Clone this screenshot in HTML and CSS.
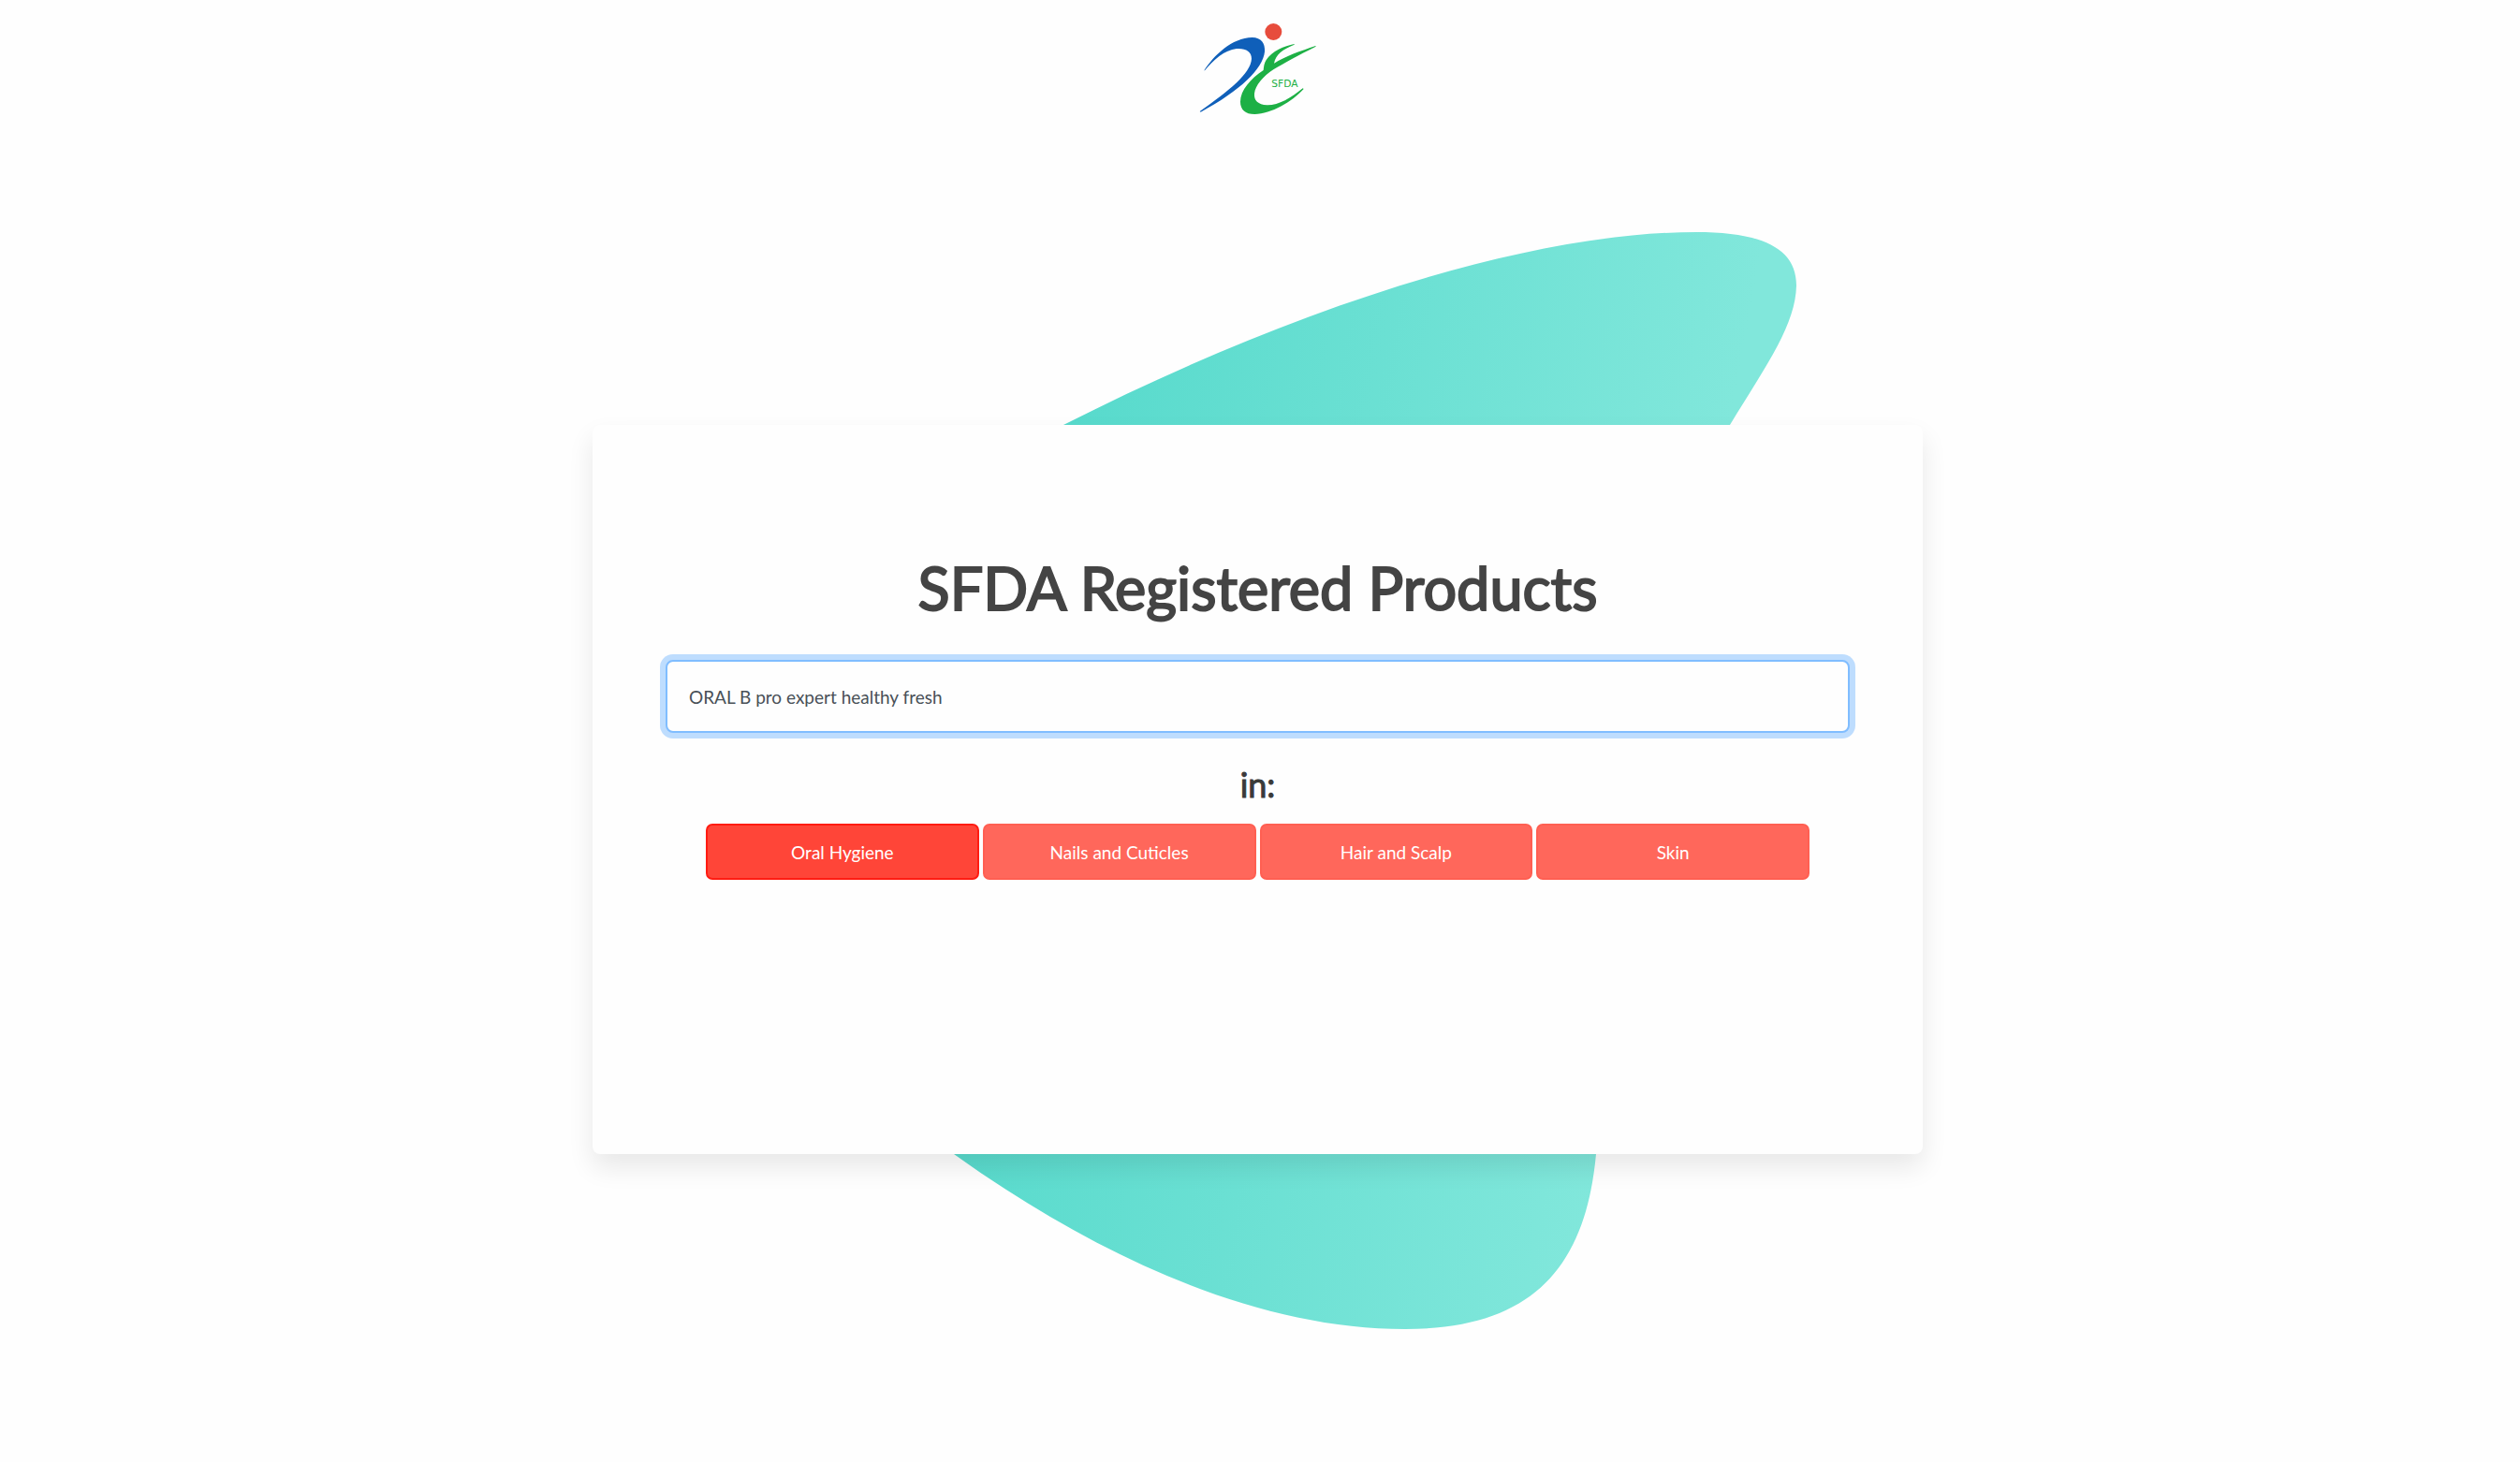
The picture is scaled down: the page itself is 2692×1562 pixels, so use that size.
FILE: index.html
```html
<!DOCTYPE html>
<html lang="en">
<head>
<meta charset="utf-8">
<meta name="viewport" content="width=device-width, initial-scale=1">
<title>SFDA Registered Products</title>
<link rel="stylesheet" href="styles.css">
</head>
<body>
<header class="header">
  <svg class="logo" viewBox="-9 0 459 375" role="img" aria-label="SFDA logo">
    <circle cx="271" cy="72" r="27" fill="#e74c3c"/>
    <path fill="#0f5fb9" d="M49 196C80 148 138 91 203 90C232 91 245 108 243 136C237 190 167 260 38 329L35 327C128 260 198 207 201 158C201 135 182 124 153 126C114 130 78 163 51 196Z"/>
    <path fill="#1db045" d="M338 111C306 117 266 134 248 162C241 173 240 185 239 195C198 222 165 260 165 296C165 321 181 336 211 336C264 335 331 296 368 255L365 253C326 285 287 308 250 307C222 305 208 292 210 270C213 244 238 214 271 193C298 176 353 146 407 119L406 117C359 133 307 151 273 173C279 144 300 128 338 113Z"/>
    <text class="logo-text" x="265" y="250">SFDA</text>
  </svg>
</header>

<main class="stage">
  <svg class="blob" viewBox="767 247 1153 1190" aria-hidden="true">
    <defs>
      <linearGradient id="teal" gradientUnits="userSpaceOnUse" x1="1000" y1="889" x2="1746" y2="1023">
        <stop offset="0" stop-color="#54d9cb"/>
        <stop offset="1" stop-color="#81e7db"/>
      </linearGradient>
    </defs>
    <path fill="url(#teal)" d="M1136 453C1360 339 1620 247 1812 247C1880 247 1919 263 1919 304C1918 345 1890 385 1848 453C1690 700 1710 980 1705 1232C1694 1350 1640 1419 1501 1419C1340 1419 1170 1340 1019 1232C860 1080 830 620 1136 453Z"/>
  </svg>

  <form class="card">
    <h1 class="title"><label for="query">SFDA Registered Products</label></h1>
    <input class="search" id="query" name="query" type="text" value="ORAL B pro expert healthy fresh" autocomplete="off">
    <h2 class="subtitle" id="category-label">in:</h2>
    <div class="categories" role="group" aria-labelledby="category-label">
      <button class="category active" type="button" aria-pressed="true">Oral Hygiene</button>
      <button class="category" type="button" aria-pressed="false">Nails and Cuticles</button>
      <button class="category" type="button" aria-pressed="false">Hair and Scalp</button>
      <button class="category" type="button" aria-pressed="false">Skin</button>
    </div>
  </form>
</main>
</body>
</html>
```
FILE: styles.css
```css
* {
  box-sizing: border-box;
}

body {
  margin: 0;
  padding-right: 5px;
  background: #fefefe;
  color: #444;
  font-family: Lato, "Liberation Sans", sans-serif;
  font-size: 19px;
}

.header {
  display: flex;
  justify-content: center;
  padding-top: 10px;
}

.logo {
  width: 153px;
  height: 125px;
}

.logo-text {
  fill: #1db045;
  font-family: "DejaVu Sans", sans-serif;
  font-size: 32px;
}

/* The blob and the card share one cell, so the card sits over the blob. */
.stage {
  display: grid;
  place-items: center;
  margin-top: 113px;
}

.blob,
.card {
  grid-area: 1 / 1;
}

.blob {
  width: 100%;
  max-width: 1153px;
}

.card {
  z-index: 1;
  display: flex;
  flex-direction: column;
  width: 100%;
  max-width: 1421px;
  min-height: 779px;
  padding: 136px 78px 80px;
  border-radius: 8px;
  background: #fefefe;
  box-shadow: 0 14px 28px rgba(0, 0, 0, .09);
  text-align: center;
}

.title,
.subtitle {
  margin: 0;
  font-weight: 400;
  line-height: 1.2;
}

.title {
  font-size: 63px;
  -webkit-text-stroke: 2px currentColor;
}

.search {
  width: 100%;
  height: 78px;
  margin-top: 40px;
  padding: 0 23px;
  border: 2px solid #80bdff;
  border-radius: 8px;
  outline: 0;
  background: #fefefe;
  box-shadow: 0 0 0 6px rgba(0, 123, 255, .25);
  color: #495057;
  font: inherit;
}

.subtitle {
  margin-top: 34px;
  color: #3a3a3a;
  font-size: 36px;
  -webkit-text-stroke: 1px currentColor;
}

.categories {
  display: grid;
  grid-template-columns: repeat(auto-fit, minmax(200px, 1fr));
  gap: 4px;
  margin: 20px 43px 0;
}

.category {
  height: 60px;
  padding: 0 12px;
  border: 2px solid #ff5f52;
  border-radius: 7px;
  background: #ff675b;
  color: #fff;
  font: inherit;
  cursor: pointer;
}

.category.active {
  border-color: #ff1c12;
  background: #ff4538;
}
```
